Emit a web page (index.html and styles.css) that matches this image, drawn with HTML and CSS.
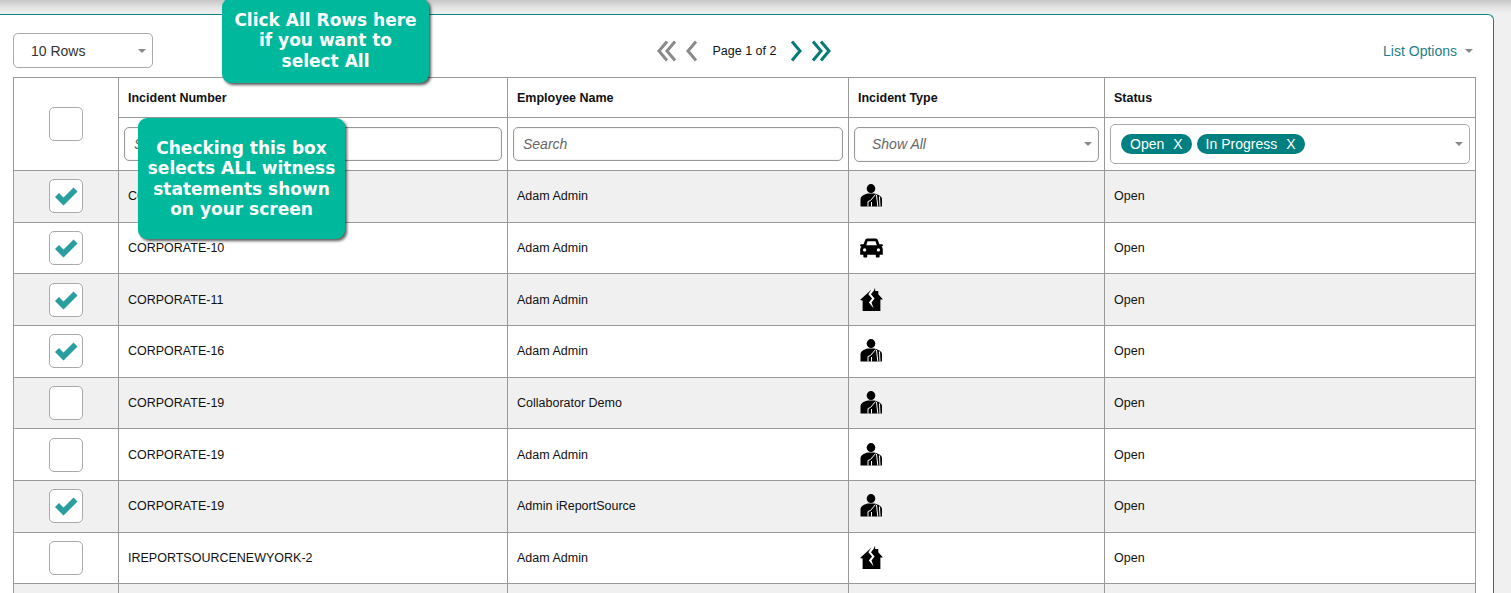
FILE: index.html
```html
<!DOCTYPE html>
<html lang="en">
<head>
<meta charset="utf-8">
<title>Incidents</title>
<link rel="stylesheet" href="styles.css">
</head>
<body>
<svg class="defs" width="0" height="0" aria-hidden="true">
  <symbol id="i-person" viewBox="0 0 22 24">
    <ellipse cx="10.5" cy="4.6" rx="4.3" ry="4.5" fill="#000"/>
    <path d="M0 22.5V15.5C0 12 3 10.8 7 9.5H14C18 10.8 21.5 12 21.5 15.5V22.5Z" fill="#000"/>
    <path d="M15 10.5L10 16.5 7.5 17.5V22.5M16 11L17.3 22.5M19 12.5L19.5 22.5M11 18V22.5" fill="none" stroke="#fff" stroke-width="1"/>
  </symbol>
  <symbol id="i-car" viewBox="0 0 24 20">
    <path d="M5.5 1.5C6 .6 6.8 0 8 0H16C17.2 0 18 .6 18.5 1.5L20.3 6H22.5C23.3 6 24 6.5 24 7.2S23.3 8.5 22.5 8.5H22.6C23.4 9.5 23.8 10.5 23.8 11.5V17H20.5V19C20.5 19.6 20 20 19.4 20H17.6C17 20 16.5 19.6 16.5 19V17H7.5V19C7.5 19.6 7 20 6.4 20H4.6C4 20 3.5 19.6 3.5 19V17H.2V11.5C.2 10.5 .6 9.5 1.4 8.5H1.5C.7 8.5 0 7.9 0 7.2S.7 6 1.5 6H3.7Z" fill="#000"/>
    <path d="M6.5 7L7.8 3H16.2L17.5 7Z" fill="#fff"/>
    <circle cx="4.8" cy="12" r="1.7" fill="#fff"/><circle cx="19.2" cy="12" r="1.7" fill="#fff"/>
  </symbol>
  <symbol id="i-house" viewBox="0 0 22 22">
    <path d="M0 11L10.5 1.5 14.5 0V2.5H17.5V5.5L22 10.5H19.5V21.5H2.5V11.5Z" fill="#000"/>
    <path d="M11.5 0L8 5.5 11.5 9.5 8.5 13.5 13 19 11 13.5 14 9.5 10.5 5.5 14 1Z" fill="#fff"/>
  </symbol>
  <symbol id="i-check" viewBox="0 0 24 20">
    <path d="M1 11L5 7 9.5 11.5 19.5 1.5 23.5 5.5 9.5 19.5Z" fill="#2a9d9f"/>
  </symbol>
</svg>

<div class="topband"></div>
<main class="card">
  <div class="toolbar">
    <div class="tool-left">
      <div class="rows-select"><span>10 Rows</span><i class="caret"></i></div>
    </div>
    <div class="pager">
      <svg class="pg pg-double" viewBox="0 0 20 22"><path d="M10 1.500L2 11l8 9.500M18 1.500L10 11l8 9.500" class="chev off"/></svg>
      <svg class="pg pg-single" viewBox="0 0 13 22"><path d="M11 1.500L3 11l8 9.500" class="chev off"/></svg>
      <span class="page-label">Page 1 of 2</span>
      <svg class="pg pg-single" viewBox="0 0 13 22"><path d="M2 1.500L10 11l-8 9.500" class="chev on"/></svg>
      <svg class="pg pg-double" viewBox="0 0 20 22"><path d="M2 1.500L10 11l-8 9.500M10 1.500L18 11l-8 9.500" class="chev on"/></svg>
    </div>
    <div class="tool-right"><span class="list-options">List Options</span><i class="caret"></i></div>
  </div>

  <table class="grid">
    <colgroup><col class="c1"><col class="c2"><col class="c3"><col class="c4"><col class="c5"></colgroup>
    <thead>
      <tr class="head">
        <th rowspan="2" class="chk"><span class="box"></span></th>
        <th>Incident Number</th><th>Employee Name</th><th>Incident Type</th><th>Status</th>
      </tr>
      <tr class="filter">
        <td class="f"><div class="search">Search</div></td>
        <td class="f"><div class="search">Search</div></td>
        <td class="f"><div class="dd">Show All<i class="caret"></i></div></td>
        <td class="f"><div class="tags"><span class="pill">Open<b>X</b></span><span class="pill">In Progress<b>X</b></span><i class="caret"></i></div></td>
      </tr>
    </thead>
    <tbody>
      <tr><td class="chk"><span class="box"><svg class="tick"><use href="#i-check"/></svg></span></td><td>CORPORATE-1</td><td>Adam Admin</td><td><svg class="ic"><use href="#i-person"/></svg></td><td>Open</td></tr>
      <tr><td class="chk"><span class="box"><svg class="tick"><use href="#i-check"/></svg></span></td><td>CORPORATE-10</td><td>Adam Admin</td><td><svg class="ic"><use href="#i-car"/></svg></td><td>Open</td></tr>
      <tr><td class="chk"><span class="box"><svg class="tick"><use href="#i-check"/></svg></span></td><td>CORPORATE-11</td><td>Adam Admin</td><td><svg class="ic"><use href="#i-house"/></svg></td><td>Open</td></tr>
      <tr><td class="chk"><span class="box"><svg class="tick"><use href="#i-check"/></svg></span></td><td>CORPORATE-16</td><td>Adam Admin</td><td><svg class="ic"><use href="#i-person"/></svg></td><td>Open</td></tr>
      <tr><td class="chk"><span class="box"></span></td><td>CORPORATE-19</td><td>Collaborator Demo</td><td><svg class="ic"><use href="#i-person"/></svg></td><td>Open</td></tr>
      <tr><td class="chk"><span class="box"></span></td><td>CORPORATE-19</td><td>Adam Admin</td><td><svg class="ic"><use href="#i-person"/></svg></td><td>Open</td></tr>
      <tr><td class="chk"><span class="box"><svg class="tick"><use href="#i-check"/></svg></span></td><td>CORPORATE-19</td><td>Admin iReportSource</td><td><svg class="ic"><use href="#i-person"/></svg></td><td>Open</td></tr>
      <tr><td class="chk"><span class="box"></span></td><td>IREPORTSOURCENEWYORK-2</td><td>Adam Admin</td><td><svg class="ic"><use href="#i-house"/></svg></td><td>Open</td></tr>
      <tr><td class="chk"><span class="box"></span></td><td></td><td></td><td></td><td></td></tr>
    </tbody>
  </table>
</main>

<aside class="callout callout-rows">
  <svg class="arrow arrow-rows" viewBox="0 0 64 24"><path d="M0 10L16 0 13 8 64 9V19L13 14 16 22Z"/></svg>
  Click All Rows here if you want to select All
</aside>
<aside class="callout callout-box">
  <svg class="arrow arrow-box" viewBox="0 0 64 32"><path d="M0 0L18 -3 14 5 64 17V32L10 12 11 18Z"/></svg>
  Checking this box selects ALL witness statements shown on your screen
</aside>
</body>
</html>
```

FILE: styles.css
```css
* { box-sizing: border-box; }
html, body { margin: 0; height: 593px; overflow: hidden; }
body {
  position: relative;
  background: #f0f0f0;
  font-family: "Liberation Sans", Arial, sans-serif;
  font-size: 12.5px;
  color: #111;
}
.defs { position: absolute; }
.topband {
  height: 14px;
  background: linear-gradient(#c6c6c6, #e4e4e4 55%, #f0f0f0);
}
.card {
  width: 1494px;
  height: 700px;
  padding: 18px 18px 0 13px;
  background: #fff;
  border: 1px solid #0b8582;
  border-left: 0;
  border-bottom: 0;
  border-top-right-radius: 6px;
}
.toolbar {
  display: grid;
  grid-template-columns: 1fr auto 1fr;
  align-items: center;
  height: 35px;
  margin-bottom: 9px;
}
.rows-select {
  position: relative;
  width: 140px;
  height: 35px;
  padding-left: 17px;
  display: flex;
  align-items: center;
  border: 1px solid #aaa;
  border-radius: 5px;
  font-size: 14px;
  color: #333;
}
.caret {
  display: inline-block;
  width: 0;
  height: 0;
  border-left: 4px solid transparent;
  border-right: 4px solid transparent;
  border-top: 4.5px solid #888;
}
.rows-select .caret { margin-left: auto; margin-right: 6px; }
.pager { display: flex; align-items: center; }
.pg { height: 22px; display: block; }
.pg-double { width: 20px; }
.pg-single { width: 13px; }
.chev { fill: none; stroke-width: 3; }
.chev.off { stroke: #8a8a8a; }
.chev.on { stroke: #057a76; }
.pager .pg-double:first-child { margin-right: 8px; }
.pager .pg-double:last-child { margin-left: 8px; }
.page-label { margin: 0 14px 0 15px; font-size: 12.5px; color: #111; }
.tool-right { display: flex; justify-content: flex-end; align-items: center; padding-right: 2px; }
.list-options { font-size: 14px; color: #1d7f88; margin-right: 8px; }

.grid {
  table-layout: fixed;
  width: 1462px;
  border-collapse: collapse;
  background: #fff;
}
.c1 { width: 105px; }
.c2 { width: 389px; }
.c3 { width: 341px; }
.c4 { width: 256px; }
.c5 { width: 371px; }
.grid th, .grid td {
  border: 1px solid #999;
  padding: 0 9px;
  text-align: left;
  vertical-align: middle;
}
.grid th { font-weight: bold; font-size: 12.5px; color: #111; }
.head { height: 40px; }
.filter { height: 53px; }
.grid tbody tr { height: 51.67px; }
.grid tbody tr:nth-child(odd) { background: #f0f0f0; }
.grid .chk { padding: 0; text-align: center; }
.grid .f { padding: 0 5px; }
.box {
  display: inline-flex;
  align-items: center;
  justify-content: center;
  width: 34px;
  height: 34px;
  vertical-align: middle;
  background: #fff;
  border: 1px solid #aaa;
  border-radius: 5px;
}
.tick { width: 24px; height: 20px; }
.ic { display: block; width: 23px; height: 24px; margin-left: 2px; }
.search, .dd {
  display: flex;
  align-items: center;
  height: 34px;
  padding-left: 9px;
  font-size: 14px;
  font-style: italic;
  color: #666;
  background: #fff;
  border: 1px solid #999;
  border-radius: 5px;
  box-shadow: inset 0 0 2px #ddd;
}
.dd { height: 35px; padding-left: 17px; }
.dd .caret { margin-left: auto; margin-right: 6px; }
.tags {
  display: flex;
  align-items: center;
  gap: 5px;
  height: 40px;
  padding-left: 10px;
  background: #fff;
  border: 1px solid #aaa;
  border-radius: 5px;
}
.tags .caret { margin-left: auto; margin-right: 6px; }
.pill {
  display: flex;
  align-items: center;
  height: 20px;
  padding: 0 9px;
  font-size: 14px;
  color: #fff;
  background: #008080;
  border-radius: 10px;
}
.pill b { margin-left: 9px; font-weight: normal; }

.callout {
  position: absolute;
  width: 207px;
  padding: 0 8px;
  display: flex;
  align-items: center;
  justify-content: center;
  text-align: center;
  font-family: "DejaVu Sans", Verdana, sans-serif;
  font-weight: bold;
  font-size: 17px;
  line-height: 20.5px;
  color: #fff;
  background: #00b89c;
  border-radius: 9px;
  box-shadow: 2px 2px 3px rgba(0, 0, 0, .65);
}
.callout-rows { left: 222px; top: -2px; height: 85px; }
.callout-box { left: 138px; top: 118px; height: 121px; }
.arrow {
  position: absolute;
  overflow: visible;
  fill: #00b89c;
  filter: drop-shadow(2px 2px 2px rgba(0, 0, 0, .55));
  z-index: -1;
}
.arrow-rows { left: -60px; top: 39px; width: 64px; height: 24px; }
.arrow-box { left: -61px; top: 9px; width: 64px; height: 32px; }
```
